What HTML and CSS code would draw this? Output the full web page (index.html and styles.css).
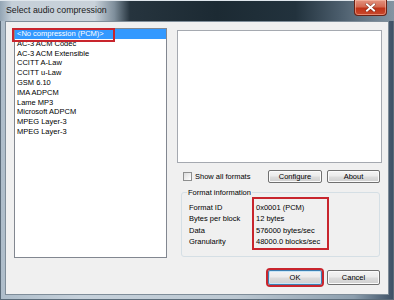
FILE: index.html
```html
<!DOCTYPE html>
<html lang="en">
<head>
  <meta charset="UTF-8">
  <meta name="viewport" content="width=device-width, initial-scale=1.0">
  <title>Select audio compression</title>
  <link rel="stylesheet" href="styles.css">
</head>
<body>
  <div class="window">
    <div class="titlebar">
      <span class="title">Select audio compression</span>
      <button class="close" aria-label="Close">
        <svg width="11" height="9" viewBox="0 0 11 9">
          <path d="M2 1.5 L9 7.5 M9 1.5 L2 7.5" stroke="#3a0d05" stroke-width="3" stroke-linecap="square" opacity="0.5"/>
          <path d="M2 1.5 L9 7.5 M9 1.5 L2 7.5" stroke="#ffffff" stroke-width="2" stroke-linecap="square"/>
        </svg>
      </button>
    </div>

    <div class="client">
      <div class="main">
        <div class="listbox">
          <div class="item selected">&lt;No compression (PCM)&gt;</div>
          <div class="item">AC-3 ACM Codec</div>
          <div class="item">AC-3 ACM Extensible</div>
          <div class="item">CCITT A-Law</div>
          <div class="item">CCITT u-Law</div>
          <div class="item">GSM 6.10</div>
          <div class="item">IMA ADPCM</div>
          <div class="item">Lame MP3</div>
          <div class="item">Microsoft ADPCM</div>
          <div class="item">MPEG Layer-3</div>
          <div class="item">MPEG Layer-3</div>
          <div class="mark mark-item"></div>
        </div>

        <div class="side">
          <div class="preview"></div>

          <div class="options">
            <label class="check"><span class="box"></span>Show all formats</label>
            <button class="btn btn-configure">Configure</button>
            <button class="btn">About</button>
          </div>

          <div class="group">
            <div class="group-title">Format information</div>
            <div class="info">
              <span>Format ID</span><span>0x0001 (PCM)</span>
              <span>Bytes per block</span><span>12 bytes</span>
              <span>Data</span><span>576000 bytes/sec</span>
              <span>Granularity</span><span>48000.0 blocks/sec</span>
            </div>
            <div class="mark mark-values"></div>
          </div>
        </div>
      </div>

      <div class="footer">
        <button class="btn btn-ok">OK</button>
        <button class="btn">Cancel</button>
      </div>
    </div>
  </div>
</body>
</html>
```

FILE: styles.css
```css
/* Page */
body {
  margin: 0;
  padding: 0;
  background: #ffffff;
}

/* Aero window frame */
.window {
  width: 394px;
  height: 300px;
  box-sizing: border-box;
  display: flex;
  flex-direction: column;
  font-family: 'Liberation Sans', Arial, sans-serif;
  font-size: 7.5px;
  color: #000000;
  background: linear-gradient(90deg, #aebdca 0%, #c6d1db 20%, #bcc8d2 60%, #8d9fae 90%, #3e5166 100%);
  border: 1px solid #5b6b79;
  border-top: none;
}

.titlebar {
  height: 21px;
  flex-shrink: 0;
  display: flex;
  align-items: flex-start;
  margin: 0 -1px;
  background: linear-gradient(90deg, #93a5b4 0%, #c5cfd8 3%, #c9d2da 24%, #7f8f9c 29%, #26343e 33%, #1c2a33 55%, #22323d 75%, #4a5c6b 86%, #8495a3 100%);
  border-top: 1px solid #dfe6ec;
  box-sizing: border-box;
}

.title {
  padding-left: 6px;
  line-height: 19px;
  font-size: 8.8px;
  color: #1a1a1a;
}

.close {
  margin-left: auto;
  margin-right: 7px;
  margin-top: -1px;
  width: 33px;
  height: 16px;
  padding: 0;
  display: flex;
  align-items: center;
  justify-content: center;
  border: 1px solid #6b2214;
  border-top: none;
  border-radius: 0 0 4px 4px;
  background: linear-gradient(#e3937f 0%, #d46a52 45%, #bf3318 55%, #c8482c 100%);
  box-shadow: inset 0 0 0 1px rgba(255, 200, 180, 0.5);
}

/* Dialog body */
.client {
  flex: 1;
  margin: 0 4px 4px;
  padding: 6px 6px 0 8px;
  display: flex;
  flex-direction: column;
  background: #f0f0f0;
  border: 1px solid #7f8d99;
}

.main {
  display: flex;
  gap: 10px;
  height: 230px;
}

/* Codec list */
.listbox {
  position: relative;
  width: 153px;
  box-sizing: border-box;
  background: #ffffff;
  border: 1px solid #828790;
}

.item {
  line-height: 9.8px;
  padding-left: 2px;
  white-space: nowrap;
}

.item.selected {
  background: #3399ff;
  color: #ffffff;
}

/* Right hand side */
.side {
  width: 205px;
  display: flex;
  flex-direction: column;
}

.preview {
  margin-top: 2px;
  height: 133px;
  box-sizing: border-box;
  background: #ffffff;
  border: 1px solid #a5a9b0;
}

.options {
  margin-top: 7px;
  height: 13px;
  display: flex;
  align-items: center;
  gap: 5px;
  padding-right: 2px;
}

.check {
  display: flex;
  align-items: center;
  margin-left: 6px;
  margin-right: auto;
}

.check .box {
  width: 9px;
  height: 9px;
  margin-right: 3px;
  box-sizing: border-box;
  border: 1px solid #8e8f8f;
  background: linear-gradient(135deg, #dcdcdc, #ffffff);
}

/* Push buttons */
.btn {
  width: 53px;
  height: 13px;
  padding: 0;
  font-family: inherit;
  font-size: 7.5px;
  color: #000000;
  border: 1px solid #707070;
  border-radius: 2px;
  background: linear-gradient(#f4f4f4 0%, #ebebeb 48%, #dddddd 52%, #cfcfcf 100%);
  box-shadow: inset 0 0 0 1px #fbfbfb;
}

.btn-configure,
.btn-ok {
  width: 54px;
}

.btn-ok {
  border-color: #3c7fb1;
  box-shadow: inset 0 0 0 1px #c9e6f7;
  outline: 2px solid #c8252d;
}

/* Format information group */
.group {
  position: relative;
  margin: 9px 2px 0 4px;
  height: 65px;
  box-sizing: border-box;
  padding-left: 7px;
  border: 1px solid #d5dfe5;
  border-radius: 3px;
}

.group-title {
  width: fit-content;
  margin: -5px 0 0 -2px;
  padding: 0 1px;
  line-height: 10px;
  background: #f0f0f0;
}

.info {
  display: grid;
  grid-template-columns: 67px auto;
  margin-top: 4px;
  line-height: 11.3px;
}

/* Red highlight boxes drawn over the dialog */
.mark {
  position: absolute;
  box-sizing: border-box;
  border: 2px solid #c8252d;
  pointer-events: none;
}

.mark-item {
  left: -3px;
  top: -1px;
  width: 103px;
  height: 14px;
}

.mark-values {
  left: 70px;
  top: 4px;
  width: 77px;
  height: 53px;
}

.footer {
  margin-top: 12px;
  display: flex;
  justify-content: flex-end;
  gap: 5px;
  padding-right: 2px;
}

.footer .btn {
  height: 15px;
}
```
